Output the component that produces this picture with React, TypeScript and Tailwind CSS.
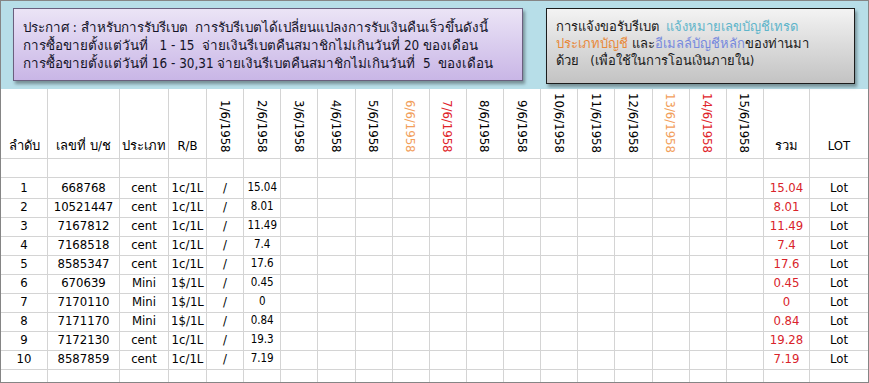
import React from 'react';

const dates = [
  '1/6/1958', '2/6/1958', '3/6/1958', '4/6/1958', '5/6/1958', '6/6/1958', '7/6/1958', '8/6/1958',
  '9/6/1958', '10/6/1958', '11/6/1958', '12/6/1958', '13/6/1958', '14/6/1958', '15/6/1958',
];

const rows = [
  ['1', '668768', 'cent', '1c/1L', '15.04', '15.04'],
  ['2', '10521447', 'cent', '1c/1L', '8.01', '8.01'],
  ['3', '7167812', 'cent', '1c/1L', '11.49', '11.49'],
  ['4', '7168518', 'cent', '1c/1L', '7.4', '7.4'],
  ['5', '8585347', 'cent', '1c/1L', '17.6', '17.6'],
  ['6', '670639', 'Mini', '1$/1L', '0.45', '0.45'],
  ['7', '7170110', 'Mini', '1$/1L', '0', '0'],
  ['8', '7171170', 'Mini', '1$/1L', '0.84', '0.84'],
  ['9', '7172130', 'cent', '1c/1L', '19.3', '19.28'],
  ['10', '8587859', 'cent', '1c/1L', '7.19', '7.19'],
];

const gridCols = 'grid grid-cols-[47px_72px_49px_38px_repeat(15,minmax(0,1fr))_46px_58px]';
const cell = 'border-r border-b border-[#d4d4d4] flex items-center justify-center overflow-hidden whitespace-nowrap';

const dateColor = (i: number) => {
  if (i === 5 || i === 12) return 'text-[#f2a05c]';
  if (i === 6 || i === 13) return 'text-[#e0242a]';
  return 'text-black';
};

const App = () => {
  return (
    <div
      className="w-[869px] h-[383px] overflow-hidden border border-[#858585] bg-white text-[13px] text-black"
      style={{ fontFamily: 'Tahoma, "DejaVu Sans Condensed", "Noto Sans", sans-serif' }}
    >
      {/* Notice band */}
      <div className="h-[88px] bg-[#b7dee8] flex items-start pt-[7px] pl-[12px] gap-[23px]">
        <div className="w-[510px] h-[73px] border border-[#6a5f7e] bg-gradient-to-b from-[#ebe4f6] to-[#c9b6e6] shadow-[2px_3px_3px_rgba(0,0,0,0.35)] pl-[9px] pt-[10px] text-[13.4px] leading-[18px] text-[#141428] whitespace-pre">
          <div>ประกาศ : สำหรับการรับรีเบต  การรับรีเบตได้เปลี่ยนแปลงการรับเงินคืนเร็วขึ้นดังนี้</div>
          <div>การซื้อขายตั้งแต่วันที่   1 - 15  จ่ายเงินรีเบตคืนสมาชิกไม่เกินวันที่ 20 ของเดือน</div>
          <div>การซื้อขายตั้งแต่วันที่ 16 - 30,31 จ่ายเงินรีเบตคืนสมาชิกไม่เกินวันที่  5  ของเดือน</div>
        </div>
        <div className="w-[309px] h-[76px] border border-[#1c1c1c] bg-gradient-to-b from-[#f3f3f3] to-[#c3c3c3] shadow-[2px_3px_3px_rgba(0,0,0,0.35)] pl-[9px] pt-[9px] text-[13px] leading-[17px] text-[#1a1a1a] whitespace-pre">
          <div>
            การแจ้งขอรับรีเบต  <span className="text-[#5fb5ca]">แจ้งหมายเลขบัญชีเทรด</span>
          </div>
          <div>
            <span className="text-[#e8893a]">ประเภทบัญชี</span> และ<span className="text-[#7689de]">อีเมลล์บัญชีหลัก</span>ของท่านมา
          </div>
          <div>ด้วย   (เพื่อใช้ในการโอนเงินภายใน)</div>
        </div>
      </div>

      {/* Header row */}
      <div className={`${gridCols} h-[70px]`}>
        <div className={`${cell} items-end pb-[3px]`}>ลำดับ</div>
        <div className={`${cell} items-end pb-[3px]`}>เลขที่ บ/ช</div>
        <div className={`${cell} items-end pb-[3px]`}>ประเภท</div>
        <div className={`${cell} items-end pb-[3px]`}>R/B</div>
        {dates.map((d, i) => (
          <div key={d} className={`${cell} items-end pb-[5px]`}>
            <span className={`[writing-mode:vertical-rl] leading-none ${dateColor(i)}`}>{d}</span>
          </div>
        ))}
        <div className={`${cell} items-end pb-[3px]`}>รวม</div>
        <div className="border-b border-[#d4d4d4] flex items-end justify-center pb-[3px]">LOT</div>
      </div>

      {/* Blank row */}
      <div className={`${gridCols} h-[19px]`}>
        {Array.from({ length: 21 }).map((_, i) => (
          <div key={i} className={i === 20 ? 'border-b border-[#d4d4d4]' : cell} />
        ))}
      </div>

      {/* Data rows */}
      {rows.map((r) => (
        <div key={r[0]} className={`${gridCols} h-[19px]`}>
          <div className={cell}>{r[0]}</div>
          <div className={cell}>{r[1]}</div>
          <div className={cell}>{r[2]}</div>
          <div className={cell}>{r[3]}</div>
          <div className={cell}>/</div>
          <div className={`${cell} text-[11.5px]`}>{r[4]}</div>
          {Array.from({ length: 13 }).map((_, i) => (
            <div key={i} className={cell} />
          ))}
          <div className={`${cell} text-[#d9232a]`}>{r[5]}</div>
          <div className="border-b border-[#d4d4d4] flex items-center justify-center">Lot</div>
        </div>
      ))}

      {/* Trailing row */}
      <div className={`${gridCols} h-[14px]`}>
        {Array.from({ length: 21 }).map((_, i) => (
          <div key={i} className={i === 20 ? '' : 'border-r border-[#d4d4d4]'} />
        ))}
      </div>
    </div>
  );
};

export default App;
